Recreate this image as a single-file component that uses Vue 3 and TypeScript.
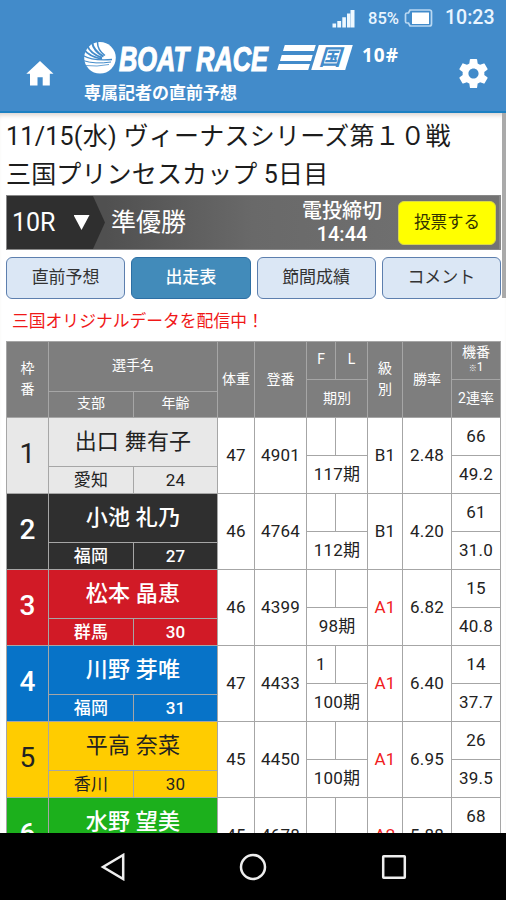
<script setup lang="ts">
interface Racer {
  no: number
  tone: string
  name: string
  branch: string
  age: number
  weight: number
  reg: number
  f: string
  term: string
  grade: string
  rate: string
  motor: number
  quinella: string
}

const racers: Racer[] = [
  { no: 1, tone: 'white', name: '出口 舞有子', branch: '愛知', age: 24, weight: 47, reg: 4901, f: '', term: '117期', grade: 'B1', rate: '2.48', motor: 66, quinella: '49.2' },
  { no: 2, tone: 'black', name: '小池 礼乃', branch: '福岡', age: 27, weight: 46, reg: 4764, f: '', term: '112期', grade: 'B1', rate: '4.20', motor: 61, quinella: '31.0' },
  { no: 3, tone: 'red', name: '松本 晶恵', branch: '群馬', age: 30, weight: 46, reg: 4399, f: '', term: '98期', grade: 'A1', rate: '6.82', motor: 15, quinella: '40.8' },
  { no: 4, tone: 'blue', name: '川野 芽唯', branch: '福岡', age: 31, weight: 47, reg: 4433, f: '1', term: '100期', grade: 'A1', rate: '6.40', motor: 14, quinella: '37.7' },
  { no: 5, tone: 'yellow', name: '平高 奈菜', branch: '香川', age: 30, weight: 45, reg: 4450, f: '', term: '100期', grade: 'A1', rate: '6.95', motor: 26, quinella: '39.5' },
  { no: 6, tone: 'green', name: '水野 望美', branch: '', age: 0, weight: 45, reg: 4678, f: '', term: '', grade: 'A2', rate: '5.88', motor: 68, quinella: '' },
]

const tabs: string[] = ['直前予想', '出走表', '節間成績', 'コメント']
const activeTab = '出走表'
</script>

<template>
  <div class="phone">
    <header class="top">
      <div class="status">
        <svg class="signal" viewBox="0 0 24 19" width="24" height="19">
          <path d="M0.5 14.5h3.6v4H0.500zM5.300 12h3.800v6.500H5.300zM10.300 8.300h3.600v10.200h-3.600zM15 4.500h3.200v14H15zM18.500 1h4v17.500h-4z" fill="#eef8ff" />
        </svg>
        <span class="pct">85%</span>
        <svg class="battery" viewBox="0 0 29 18" width="29" height="18">
          <path d="M6 1H25.500Q27.500 1 27.500 3V15Q27.500 17 25.500 17H6L4.500 14H3Q1.500 14 1.500 12.500V5.500Q1.500 4 3 4H4.500Z" fill="none" stroke="#b9d8f2" stroke-width="1.700" />
          <rect x="8" y="3.500" width="17" height="11.500" fill="#fff" />
        </svg>
        <span class="clock">10:23</span>
      </div>
      <div class="brandbar">
        <svg class="home" viewBox="0 0 28 25" width="28" height="25">
          <path d="M14 0L27.500 12.800H23.800V24.500H16.700V16.300H11.500V24.500H4V12.800H0.300Z" fill="#fff" />
        </svg>
        <div class="brand">
          <div class="logo">
            <svg class="wave" viewBox="0 0 34 34" width="34" height="34">
              <circle cx="17" cy="16.800" r="15.800" fill="#fff" />
              <g fill="none" stroke="#428bca">
                <path d="M14.500 0Q14 9 22 14.500" stroke-width="1.500" />
                <path d="M9 1Q10.500 10 20.500 15.500" stroke-width="2" />
                <path d="M4 4Q7 12.500 19 16.700" stroke-width="2" />
                <path d="M1 8.500Q6 15.500 19 18" stroke-width="1.900" />
                <path d="M0 14.500Q9 20 29 18.500" stroke-width="1.300" />
                <path d="M0 19.500Q12 23.500 28 21" stroke-width="1" />
                <path d="M2 24.500Q14 26 26 23.500" stroke-width="0.800" />
              </g>
            </svg>
            <svg class="word" viewBox="0 0 152 30" width="152" height="30">
              <text x="1" y="27.500" textLength="149" lengthAdjust="spacingAndGlyphs">BOAT RACE</text>
            </svg>
            <div class="venue">
              <div class="stripes"><i></i><i></i><i></i></div>
              <div class="plate"><span>国</span></div>
            </div>
            <span class="code">10#</span>
          </div>
          <div class="tagline">専属記者の直前予想</div>
        </div>
        <svg class="gear" viewBox="2 2 20 20" width="29" height="29">
          <path d="M19.430 12.980c.04-.32.07-.64.07-.98s-.03-.66-.07-.98l2.110-1.650c.19-.15.24-.42.12-.64l-2-3.460c-.12-.22-.39-.3-.61-.22l-2.490 1c-.52-.4-1.080-.73-1.690-.98l-.38-2.650C14.460 2.180 14.250 2 14 2h-4c-.25 0-.46.18-.49.42l-.38 2.650c-.61.25-1.170.59-1.690.98l-2.490-1c-.23-.09-.49 0-.61.22l-2 3.460c-.13.22-.07.49.12.64l2.110 1.650c-.04.32-.07.65-.07.98s.03.66.07.98l-2.110 1.650c-.19.15-.24.42-.12.64l2 3.460c.12.22.39.3.61.22l2.490-1c.52.4 1.080.73 1.690.98l.38 2.650c.03.24.24.42.49.42h4c.25 0 .46-.18.49-.42l.38-2.650c.61-.25 1.170-.59 1.690-.98l2.490 1c.23.09.49 0 .61-.22l2-3.460c.12-.22.07-.49-.12-.64l-2.110-1.650zM12 15.500c-1.930 0-3.500-1.570-3.500-3.500s1.570-3.500 3.500-3.500 3.500 1.570 3.500 3.500-1.570 3.500-3.500 3.500z" fill="#fff" />
        </svg>
      </div>
    </header>

    <main class="content">
      <div class="scroll">
        <h1 class="title">
          <span class="series">11/15(水) ヴィーナスシリーズ第１０戦</span>
          <span class="cup">三国プリンセスカップ 5日目</span>
        </h1>

        <section class="race">
          <div class="round">
            <span>10R</span>
            <i class="caret"></i>
          </div>
          <div class="racename">準優勝</div>
          <div class="deadline"><span>電投締切</span><span>14:44</span></div>
          <button class="vote">投票する</button>
        </section>

        <nav class="tabs">
          <button v-for="t in tabs" :key="t" class="tab" :class="{ active: t === activeTab }">{{ t }}</button>
        </nav>

        <p class="notice">三国オリジナルデータを配信中！</p>

        <div class="table">
          <div class="row head">
            <div class="cell tall"><span>枠<br />番</span></div>
            <div class="stack name-stack">
              <div class="cell wide">選手名</div>
              <div class="cell">支部</div>
              <div class="cell">年齢</div>
            </div>
            <div class="cell">体重</div>
            <div class="cell">登番</div>
            <div class="stack term-stack">
              <div class="cell fl">F</div>
              <div class="cell fl">L</div>
              <div class="cell wide">期別</div>
            </div>
            <div class="cell tall"><span>級<br />別</span></div>
            <div class="cell">勝率</div>
            <div class="stack motor-stack">
              <div class="cell motor"><span>機番</span><span class="mark"><small>※</small>1</span></div>
              <div class="cell">2連率</div>
            </div>
          </div>
          <div v-for="r in racers" :key="r.no" class="row">
            <div class="cell no" :class="r.tone">{{ r.no }}</div>
            <div class="stack name-stack">
              <div class="cell wide name" :class="r.tone">{{ r.name }}</div>
              <div class="cell sub" :class="r.tone">{{ r.branch }}</div>
              <div class="cell sub" :class="r.tone">{{ r.age || '' }}</div>
            </div>
            <div class="cell">{{ r.weight }}</div>
            <div class="cell">{{ r.reg }}</div>
            <div class="stack term-stack">
              <div class="cell">{{ r.f }}</div>
              <div class="cell"></div>
              <div class="cell wide">{{ r.term }}</div>
            </div>
            <div class="cell" :class="{ ace: r.grade.startsWith('A') }">{{ r.grade }}</div>
            <div class="cell">{{ r.rate }}</div>
            <div class="stack motor-stack">
              <div class="cell">{{ r.motor }}</div>
              <div class="cell">{{ r.quinella }}</div>
            </div>
          </div>
        </div>
      </div>
      <div class="track"><div class="thumb"></div></div>
    </main>

    <footer class="softkeys">
      <svg viewBox="0 0 28 28" width="28" height="28"><path d="M24.200 2V26L4 14Z" /></svg>
      <svg viewBox="0 0 28 28" width="28" height="28"><circle cx="14" cy="14" r="12" /></svg>
      <svg viewBox="0 0 28 28" width="28" height="28"><rect x="3.200" y="3.200" width="21.600" height="21.600" rx="0.500" /></svg>
    </footer>
  </div>
</template>

<style>
body {
  margin: 0;
  background: #fff;
}
</style>

<style scoped>
.phone {
  width: 506px;
  height: 900px;
  display: flex;
  flex-direction: column;
  overflow: hidden;
  font-family: Roboto, "Noto Sans CJK JP", sans-serif;
  color: #222;
}
.top {
  height: 113px;
  box-sizing: border-box;
  background: #428bca;
  border-bottom: 2px solid #1c80c2;
  color: #fff;
  flex: none;
}
.status {
  height: 36px;
  display: flex;
  align-items: center;
  justify-content: flex-end;
  padding-right: 11px;
}
.signal { margin-right: 12px; }
.pct {
  font-size: 16.5px;
  font-weight: 500;
  width: 32px;
  margin-right: 4px;
  color: #e9f5ff;
}
.battery { margin-right: 12px; }
.clock {
  font-size: 19.500px;
  line-height: 36px;
  font-weight: 500;
  width: 50px;
  color: #e9f5ff;
}
.brandbar {
  display: flex;
  align-items: flex-start;
  padding: 0 18px 0 26px;
}
.home { margin-top: 25px; }
.brand {
  flex: 1;
  padding: 5px 0 0 29px;
}
.logo {
  display: flex;
  height: 34px;
}
.wave { flex: none; }
.word {
  flex: none;
  margin-top: 2px;
  margin-left: 1px;
  overflow: visible;
}
.word text {
  font-family: "Liberation Sans", sans-serif;
  font-weight: 700;
  font-style: italic;
  font-size: 34.500px;
  fill: #fff;
  stroke: #fff;
  stroke-width: 1.200px;
}
.venue {
  display: flex;
  gap: 3px;
  margin: 4px 0 0 11px;
  height: 25px;
  transform: skewX(-17deg);
}
.stripes {
  width: 31px;
  display: flex;
  flex-direction: column;
  justify-content: space-between;
}
.stripes i {
  height: 6px;
  background: #fff;
}
.plate {
  width: 34px;
  background: #fff;
  color: #428bca;
  display: flex;
  align-items: center;
  justify-content: center;
  font-size: 22px;
  line-height: 25px;
  font-weight: 700;
}
.code {
  font-family: "Open Sans", sans-serif;
  font-weight: 700;
  font-size: 19px;
  line-height: 24px;
  letter-spacing: 1px;
  margin: 2px 0 0 13px;
}
.tagline {
  font-size: 17px;
  line-height: 24px;
  font-weight: 700;
  margin: 6px 0 0 1px;
  white-space: nowrap;
}
.gear { margin-top: 23px; }
.content {
  flex: 1;
  min-height: 0;
  display: flex;
  overflow: hidden;
  box-shadow: inset 0 5px 5px -3px #d8d0cc;
}
.scroll {
  width: 495px;
  padding: 5px 0 0 6px;
}
.track { width: 4px; margin-left: 1px; }
.thumb {
  height: 185px;
  background: #aaa;
}
.title {
  margin: 0;
  height: 77px;
  display: flex;
  flex-direction: column;
  font-size: 25px;
  line-height: 38px;
  font-weight: 400;
  color: #1c1c1c;
  white-space: nowrap;
}
.series { letter-spacing: 0.270px; }
.cup { letter-spacing: 0.150px; }
.race {
  height: 55px;
  display: flex;
  align-items: center;
  box-sizing: border-box;
  background: linear-gradient(90deg, #505050 20%, #696969 50%, #737373);
  border: 1px solid #888;
  border-right-width: 2px;
  color: #fff;
}
.round {
  width: 98px;
  height: 53px;
  box-sizing: border-box;
  background: #2f2f2f;
  clip-path: polygon(0 0, 86px 0, 98px 50%, 86px 100%, 0 100%);
  display: flex;
  align-items: center;
  padding-left: 5px;
  font-size: 25px;
  gap: 18px;
}
.caret {
  width: 16px;
  height: 15px;
  background: #fff;
  clip-path: polygon(0 0, 100% 0, 50% 100%);
}
.racename {
  width: 190px;
  padding-left: 6px;
  font-size: 25px;
  line-height: 40px;
}
.deadline {
  width: 82px;
  display: flex;
  flex-direction: column;
  align-items: center;
  font-size: 20px;
  line-height: 23px;
  font-weight: 500;
  white-space: nowrap;
}
.vote {
  margin: 0 0 0 15px;
  width: 98px;
  height: 44px;
  border: 1px solid #d8d84a;
  border-radius: 6px;
  background: #ff0;
  font: 400 16.500px/24px Roboto, "Noto Sans CJK JP", sans-serif;
  color: #333300;
  padding: 0;
}
.tabs {
  display: flex;
  gap: 6px;
  margin-top: 7px;
}
.tab {
  flex: 1;
  height: 42px;
  padding: 0 0 2px;
  border: 1.500px solid #5d7fae;
  border-radius: 6px;
  background: #dbe7f5;
  font: 400 17px/24px Roboto, "Noto Sans CJK JP", sans-serif;
  color: #333;
}
.tab.active {
  background: #428bba;
  border-color: #2d6fa4;
  color: #fff;
  font-weight: 500;
}
.notice {
  margin: 0;
  height: 43px;
  padding-left: 6px;
  font-size: 16.800px;
  line-height: 44px;
  color: #f01818;
}
.table {
  width: 495px;
  box-sizing: border-box;
  padding: 1px;
  background: #a6a6a6;
  display: flex;
  flex-direction: column;
  gap: 1px;
  margin-top: -1px;
}
.row {
  display: grid;
  grid-template-columns: 41px 168px 36px 51px 60px 34px 48px 48px;
  column-gap: 1px;
  height: 75px;
}
.cell {
  background: #fff;
  display: flex;
  align-items: center;
  justify-content: center;
  padding-bottom: 1px;
  font-size: 17px;
  line-height: 20px;
  text-align: center;
  white-space: nowrap;
  letter-spacing: 0.200px;
}
.stack {
  display: grid;
  gap: 1px;
}
.name-stack {
  grid-template-columns: 84px 83px;
  grid-template-rows: 48px 26px;
}
.head .name-stack { grid-template-rows: 49px 25px; }
.name-stack .cell,
.term-stack .cell,
.motor-stack .cell { box-sizing: border-box; }
.term-stack {
  grid-template-columns: 28px 31px;
  grid-template-rows: 37px 37px;
}
.motor-stack { grid-template-rows: 37px 37px; }
.wide { grid-column: 1 / -1; }
.head .cell {
  background: #7e7e7e;
  color: #fff;
  font-size: 14px;
  letter-spacing: 0;
}
.row > .cell { box-sizing: border-box; }
.head .name-stack .cell { padding-bottom: 3px; }
.head .tall { line-height: 21px; }
.head .fl { padding-bottom: 4px; font-size: 14px; }
.head .cell.motor {
  flex-direction: column;
  line-height: 18px;
  padding-bottom: 4px;
}
.head .mark {
  font-size: 12px;
  line-height: 12px;
}
.mark small { font-size: 8px; }
.cell.no { font-size: 28px; padding-bottom: 3px; }
.cell.name { font-size: 22px; line-height: 28px; }
.cell.sub { font-size: 17px; }
.cell.ace { color: #f02020; }
.cell.white { background: #e8e8e8; }
.cell.black { background: #2f2f2f; color: #fff; font-weight: 500; }
.cell.red { background: #d11a26; color: #fff; font-weight: 500; }
.cell.blue { background: #0773c8; color: #fff; font-weight: 500; }
.cell.green { background: #1cb01c; color: #fff; font-weight: 500; }
.cell.yellow { background: #fc0; }
.softkeys {
  flex: none;
  height: 67px;
  background: #000;
  display: flex;
  align-items: center;
  justify-content: center;
  gap: 112.500px;
}
.softkeys svg {
  fill: none;
  stroke: #eee;
  stroke-width: 2.500;
}
</style>
